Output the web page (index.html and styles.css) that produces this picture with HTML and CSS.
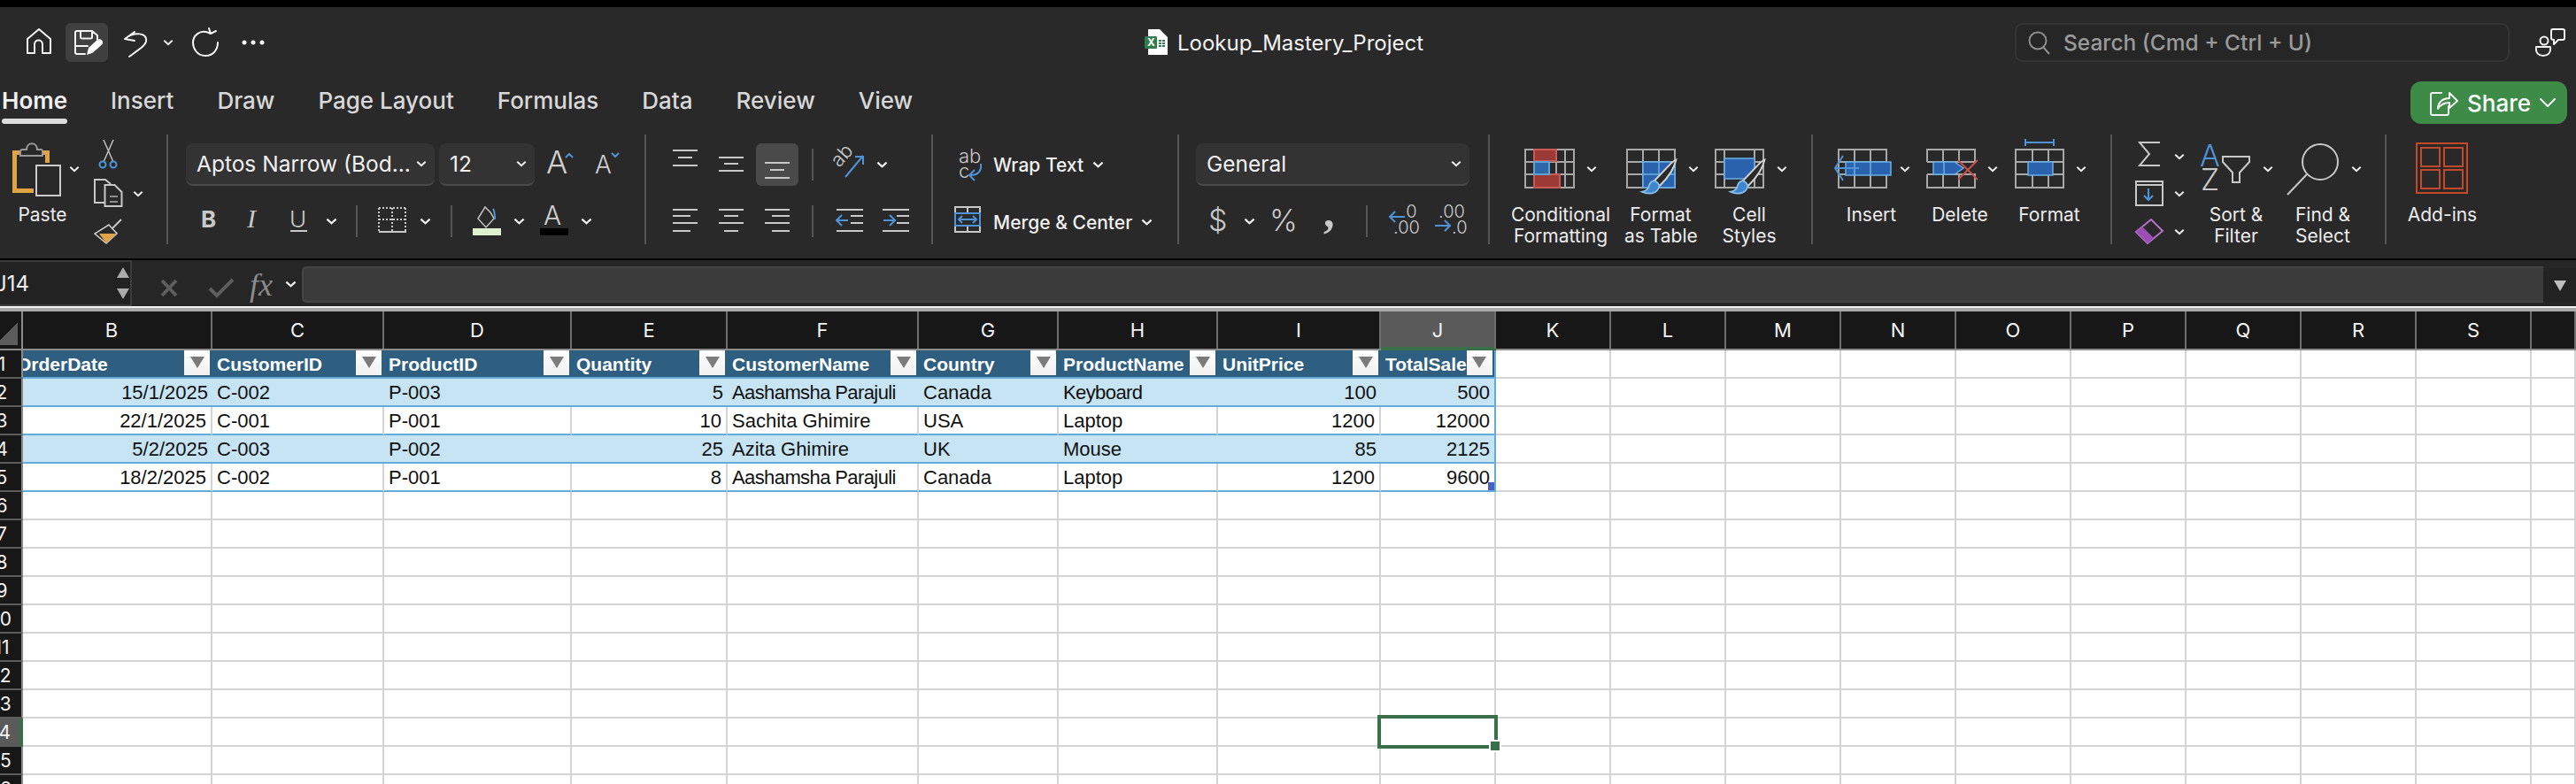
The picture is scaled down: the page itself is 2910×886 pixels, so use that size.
FILE: index.html
```html
<!DOCTYPE html>
<html lang="en">
<head>
    <meta charset="UTF-8">
    <title>Lookup_Mastery_Project</title>
    <link rel="stylesheet" href="styles.css">
</head>
<body>
    <svg class="defs" width="0" height="0">
        <symbol id="ch" viewBox="0 0 14 8"><path class="chev" d="M1.5 1.5 7 6.5l5.5-5"/></symbol>
        <symbol id="brush" viewBox="0 0 50 50">
            <path class="ln-brush" fill="#292929" d="M48 2c-2 1-5 3-7 5L19 30l7 7C38 25 46 12 48 2Z"/>
            <path class="blue-brush" d="M19 30c-6 1-7 5-8 9-1 3-4 5-9 6 9 4 20 3 23-6 1-3 0-6-6-9Z"/>
        </symbol>
    </svg>

    <div class="top-edge"></div>

    <header class="titlebar">
        <svg class="qat" width="340" height="72" viewBox="0 8 340 72">
            <path class="ln-w" d="M31 60V44L44 33l13 11v16h-9V50c0-6-9-6-9 0v10Z"/>
            <rect x="74" y="26" width="48" height="44" rx="6" fill="#404040"/>
            <path class="ln-w" d="M96 61H87c-1.500 0-2-1-2-2V37c0-1 .5-2 2-2h17l6 5v9M91 35v7c0 1 .5 1.500 2 1.500h9c1.500 0 2-.5 2-1.500v-7M85 52h14"/>
            <path fill="#fff" d="M98 62l2-8 10-9c2-1.500 4-1 5.500 1 1 1.500 1 3-.5 4.500l-10 9Z"/>
            <path class="ln-w" d="M141 44l11-8M141 44l11 2M141 44c10-8 26-8 24 3-1 4-4 6-19 17"/>
            <use href="#ch" x="184" y="44" width="12" height="8"/>
            <path class="ln-w" d="M238 38c-13-7-20 4-20 10s4 15 14 15 14-8 14-15M238 38l-2-6M238 38l6-3"/>
            <circle cx="276" cy="48" r="2.500" fill="#fff"/><circle cx="286" cy="48" r="2.500" fill="#fff"/><circle cx="296" cy="48" r="2.500" fill="#fff"/>
        </svg>
        <div class="doc-title">
            <svg width="28" height="30" viewBox="1291 33 28 30">
                <path fill="#fff" d="M1296 33h13l9 9v20h-22Z"/>
                <rect x="1292" y="41" width="14" height="14" rx="1" fill="#2f7d4c"/>
                <text class="xl-x" x="1295" y="52">X</text>
                <path fill="#2f7d4c" d="M1308 45h3v2h-3zM1312 45h3v2h-3zM1308 48h3v2h-3zM1312 48h3v2h-3zM1308 51h3v2h-3zM1312 51h3v2h-3z"/>
            </svg>
            <span>Lookup_Mastery_Project</span>
        </div>
        <div class="search">
            <svg width="28" height="28" viewBox="0 0 28 28"><circle class="ln-grey" cx="12" cy="12" r="9.500"/><path class="ln-grey" d="M18 19l7 8"/></svg>
            <span>Search (Cmd + Ctrl + U)</span>
        </div>
        <svg class="collab" width="34" height="34" viewBox="0 0 34 34">
            <circle class="ln-w" cx="10" cy="15" r="4.500"/>
            <path class="ln-w" d="M1 22h16c1 7-3 10-8 10s-9-3-8-10Z"/>
            <path class="ln-w" d="M20 2h11c1 0 2 1 2 2v8c0 1-1 2-2 2h-5l-5 5v-5c-2 0-3-1-3-2V4c0-1 1-2 2-2Z"/>
        </svg>
    </header>

    <nav class="tabs">
        <div class="tab active">Home</div>
        <div class="tab">Insert</div>
        <div class="tab">Draw</div>
        <div class="tab">Page Layout</div>
        <div class="tab">Formulas</div>
        <div class="tab">Data</div>
        <div class="tab">Review</div>
        <div class="tab">View</div>
        <button class="share">
            <svg width="34" height="34" viewBox="0 0 34 34"><path class="ln-w" d="M15 6H5c-1.500 0-2 1-2 2v21c0 1.500 .5 2 2 2h16c1.500 0 2-.5 2-2v-8"/><path class="ln-w" d="M11 24c0-8 6-12 13-12V6l9 9-9 8v-6c-6 0-10 2-13 7Z"/></svg>
            <span>Share</span>
            <svg width="18" height="10" viewBox="0 0 18 10"><path class="ln-w" d="M1 1l8 8 8-8"/></svg>
        </button>
    </nav>

    <section class="ribbon">
        <div class="group g-clip">
            <div class="paste">
                <svg width="100" height="79" viewBox="0 152 100 79">
                    <path fill="#e0a346" d="M14 170h10v5h-5v38h19v5H14ZM48 170h8v14h-5v-9h-3Z"/>
                    <path fill="#292929" stroke="#999" stroke-width="2" d="M23 176v-5c0-1 1-2 3-2h4c0-9 12-9 12 0h4c2 0 2 1 2 2v5Z"/>
                    <rect x="41" y="187" width="27" height="34" fill="#292929" stroke="#ccc" stroke-width="2"/>
                    <use href="#ch" x="78" y="187" width="12" height="8"/>
                </svg>
                <div class="big-label">Paste</div>
            </div>
            <svg width="86" height="124" viewBox="100 152 86 124">
                <path class="ln-thin" d="M117 158l11 25M128 158l-11 25"/>
                <circle class="ln-blue" cx="116" cy="186" r="3.500"/><circle class="ln-blue" cx="128" cy="186" r="3.500"/>
                <path class="ln" d="M119 229h-12v-26h12l6 5"/>
                <path class="ln" d="M118.500 209h11l8 8v16h-19Z"/>
                <path class="ln-grey" d="M124 222h9M124 228h9"/>
                <use href="#ch" x="150" y="215" width="12" height="8"/>
                <path class="ln" d="M137 248l-10 10M122 255l10 9"/>
                <path fill="#292929" stroke="#ccc" stroke-width="1.500" d="M123 254l-16 10 13 11 12-11Z"/>
                <path fill="#e0a346" d="M112 264l19 0-11 11Z"/>
            </svg>
        </div>

        <div class="group g-font">
            <div class="row-ctrl">
                <div class="combo font-name"><span>Aptos Narrow (Bod...</span><svg width="12" height="8"><use href="#ch" width="12" height="8"/></svg></div>
                <div class="combo font-size"><span>12</span><svg width="12" height="8"><use href="#ch" width="12" height="8"/></svg></div>
                <svg width="100" height="48" viewBox="604 162 100 48">
                    <text class="t-thin big-a" x="617" y="196">A</text>
                    <path class="ln-blue" d="M639 178l4-4 4 4"/>
                    <text class="t-thin small-a" x="672" y="196">A</text>
                    <path class="ln-blue" d="M691 173l4 4 4-4"/>
                </svg>
            </div>
            <svg class="row-2" width="538" height="44" viewBox="190 230 538 44">
                <text class="t-b" x="227" y="257">B</text>
                <text class="t-i" x="279" y="257">I</text>
                <text class="t-u" x="327" y="257">U</text>
                <path class="ln" d="M328 261h19"/>
                <use href="#ch" x="368" y="246" width="13" height="8"/>
                <path class="sep-v" d="M403 232v36M510 232v36"/>
                <path class="ln-dash" d="M428 235h30M428 248h30M428 235v26M443 235v26M458 235v26"/>
                <path class="ln" d="M428 262h31"/>
                <use href="#ch" x="474" y="246" width="13" height="8"/>
                <path class="ln-thin" d="M540 247l8-13 6 6 4 7-9 10Z"/>
                <path class="ln-blue" d="M557 236c2 3 2 6 2 12"/>
                <rect x="534" y="258" width="32" height="8" fill="#dff0cf"/>
                <use href="#ch" x="580" y="246" width="13" height="8"/>
                <text class="t-thin a-col" x="614" y="254">A</text>
                <rect x="610" y="258" width="32" height="8" fill="#000"/>
                <use href="#ch" x="656" y="246" width="13" height="8"/>
            </svg>
        </div>

        <div class="group g-align">
            <svg width="322" height="48" viewBox="730 162 322 48">
                <path class="ln" d="M760 170h28M766 178h16M760 187h28M812 178h28M818 185h16M812 193h28"/>
                <rect x="854" y="162" width="48" height="48" rx="6" fill="#4a4a4a"/>
                <path class="ln" d="M864 184h28M870 192h16M864 201h28"/>
                <path class="sep-v" d="M918 168v36"/>
                <text class="t-ab" x="0" y="0" transform="translate(948 190) rotate(-48)">ab</text>
                <path class="ln-blue" d="M955 200l20-24M966 177h9v9"/>
                <use href="#ch" x="990" y="182" width="13" height="8"/>
            </svg>
            <svg class="row-2" width="322" height="44" viewBox="730 230 322 44">
                <path class="ln" d="M760 237h28M760 244h20M760 252h28M760 261h20M812 237h28M818 244h16M812 252h28M818 261h16M864 237h28M872 244h20M864 252h28M872 261h20"/>
                <path class="sep-v" d="M918 232v36"/>
                <path class="ln" d="M945 237h30M961 244h14M961 252h14M945 261h30M997 237h30M1013 244h14M1013 252h14M997 261h30"/>
                <path class="ln-blue" d="M958 249h-12M951 243l-6 6 6 6M998 249h12M1005 243l6 6-6 6"/>
            </svg>
        </div>

        <div class="group g-wrap">
            <div class="line-btn">
                <svg width="68" height="48" viewBox="1054 162 68 48">
                    <text class="t-ab2" x="1083" y="184">ab</text>
                    <text class="t-ab2" x="1083" y="201">c</text>
                    <path class="ln-blue" d="M1108 185c1 8-3 13-12 13M1101 192l-6 6 6 6"/>
                </svg>
                <span>Wrap Text</span>
                <svg width="13" height="8"><use href="#ch" width="13" height="8"/></svg>
            </div>
            <div class="line-btn">
                <svg width="68" height="44" viewBox="1054 230 68 44">
                    <path class="ln" d="M1079 235h28v28h-28ZM1093 235v7M1093 256v7"/>
                    <path class="ln-blue" d="M1079 242h28v14h-28ZM1083 249h20M1087 245l-4 4 4 4M1099 245l4 4-4 4"/>
                </svg>
                <span>Merge &amp; Center</span>
                <svg width="13" height="8"><use href="#ch" width="13" height="8"/></svg>
            </div>
        </div>

        <div class="group g-num">
            <div class="combo num-format"><span>General</span><svg width="12" height="8"><use href="#ch" width="12" height="8"/></svg></div>
            <svg class="row-2" width="349" height="44" viewBox="1332 230 349 44">
                <text class="t-num" x="1365" y="261">$</text>
                <use href="#ch" x="1405" y="246" width="13" height="8"/>
                <text class="t-num" x="1434" y="261">%</text>
                <text class="t-comma" x="1495" y="256">,</text>
                <path class="sep-v" d="M1544 232v36"/>
                <text class="t-dec" x="1583" y="246">.0</text>
                <text class="t-dec" x="1574" y="264">.00</text>
                <path class="ln-blue" d="M1587 245h-17M1576 239l-6 6 6 6"/>
                <text class="t-dec" x="1625" y="246">.00</text>
                <text class="t-dec" x="1640" y="264">.0</text>
                <path class="ln-blue" d="M1621 255h17M1632 249l6 6-6 6"/>
            </svg>
        </div>

        <div class="group g-styles">
            <svg width="362" height="79" viewBox="1684 152 362 79">
                <path class="ln-grid" d="M1724 169h55v43h-55ZM1724 183h55M1724 197h55M1734 169v43M1759 169v43M1769 169v43"/>
                <path class="fill-red" d="M1734 169h25v13h-25ZM1734 197h29v15h-29Z"/>
                <path class="fill-blue" d="M1734 183h17v14h-17Z"/>
                <use href="#ch" x="1793" y="187" width="12" height="8"/>

                <path class="ln-grid" d="M1839 169h54v43h-54ZM1839 183h54M1839 197h54M1857 169v43M1875 169v43"/>
                <path class="fill-blue2" d="M1857 183h36v29h-36Z"/>
                <path class="ln-sky" d="M1857 197h36M1875 183v29"/>
                <use href="#brush" x="1852" y="179" width="46" height="42"/>
                <use href="#ch" x="1908" y="187" width="12" height="8"/>

                <path class="ln-grid" d="M1939 169h54v43h-54ZM1939 183h54M1939 197h54M1949 169v43M1983 169v43"/>
                <path class="fill-blue2" d="M1949 179h34v23h-34Z"/>
                <use href="#brush" x="1952" y="179" width="46" height="42"/>
                <use href="#ch" x="2008" y="187" width="12" height="8"/>
            </svg>
            <div class="big-labels labels-styles">
                <div class="big-label">Conditional<br>Formatting</div>
                <div class="big-label">Format<br>as Table</div>
                <div class="big-label">Cell<br>Styles</div>
            </div>
        </div>

        <div class="group g-cells">
            <svg width="336" height="79" viewBox="2048 152 336 79">
                <path class="ln-grid" d="M2077 169h54v43h-54ZM2077 183h54M2077 197h54M2095 169v43M2113 169v43"/>
                <path class="fill-blue2" d="M2085 183h51v15h-51Z"/>
                <path class="ln-sky" d="M2095 183v15M2113 183v15"/>
                <path class="ln-blue" d="M2100 190h-26M2082 176l-9 14 9 14"/>
                <use href="#ch" x="2146" y="187" width="12" height="8"/>

                <path class="ln-grid" d="M2177 183v-14h54v14h-54M2177 197v15h54v-15h-54M2195 169v14M2213 169v14M2195 197v15M2213 197v15"/>
                <path class="fill-blue2" d="M2184 183h24l10 7-10 7h-24Z"/>
                <path class="ln-sky" d="M2196 183v14"/>
                <path class="ln-red" d="M2212 181l22 22M2234 181l-22 22"/>
                <use href="#ch" x="2245" y="187" width="12" height="8"/>

                <path class="ln-blue" d="M2288 161h32M2288 157v8M2320 157v8"/>
                <path class="ln-grid" d="M2277 169h54v43h-54ZM2277 183h54M2277 197h54M2296 169v43M2314 169v43"/>
                <path class="fill-blue2" d="M2291 183h28v15h-28Z"/>
                <use href="#ch" x="2345" y="187" width="12" height="8"/>
            </svg>
            <div class="big-labels labels-cells">
                <div class="big-label">Insert</div>
                <div class="big-label">Delete</div>
                <div class="big-label">Format</div>
            </div>
        </div>

        <div class="group g-edit">
            <svg width="90" height="124" viewBox="2386 152 90 124">
                <path class="ln" d="M2440 161h-23l11 13-11 13h23"/>
                <use href="#ch" x="2456" y="173" width="12" height="8"/>
                <path class="ln" d="M2413 205h30v27h-30ZM2413 209h30"/>
                <path class="ln-blue" d="M2427 213v13M2422 221l5 5 5-5"/>
                <use href="#ch" x="2456" y="215" width="12" height="8"/>
                <path class="ln-pur" d="M2413 262l17-14 13 13-17 14Z"/>
                <path fill="#9a4fb4" d="M2413 262l7-6 13 13-7 6Z"/>
                <use href="#ch" x="2456" y="258" width="12" height="8"/>
            </svg>
            <div class="edit-big">
                <svg width="204" height="79" viewBox="2476 152 204 79">
                    <text class="t-sort blue-text" x="2485" y="188">A</text>
                    <text class="t-sort" x="2486" y="215">Z</text>
                    <path class="ln" d="M2511 177h30v6l-11 12v11h-8v-11l-11-12Z"/>
                    <use href="#ch" x="2556" y="187" width="12" height="8"/>
                    <circle class="ln" cx="2621" cy="183" r="20"/>
                    <path class="ln" d="M2606 197l-22 23"/>
                    <use href="#ch" x="2656" y="187" width="12" height="8"/>
                </svg>
                <div class="big-labels labels-edit">
                    <div class="big-label">Sort &amp;<br>Filter</div>
                    <div class="big-label">Find &amp;<br>Select</div>
                </div>
            </div>
        </div>

        <div class="group g-addins">
            <svg width="120" height="79" viewBox="2696 152 120 79">
                <path class="ln-org" d="M2730 162h57v56h-57Z"/>
                <path class="ln-org" d="M2735 167h21v21h-21ZM2761 167h21v21h-21ZM2735 192h21v21h-21ZM2761 192h21v21h-21Z"/>
            </svg>
            <div class="big-labels labels-addins">
                <div class="big-label">Add-ins</div>
            </div>
        </div>
    </section>

    <div class="formula-bar">
        <div class="name-box">
            <span>J14</span>
            <div class="spin"><i class="up"></i><i class="down"></i></div>
        </div>
        <svg class="fx-icons" width="190" height="52" viewBox="150 294 190 52">
            <path class="fx-off" d="M183 317l16 17M199 317l-16 17"/>
            <path class="fx-off" d="M237 326l8 8 18-18"/>
            <text class="t-fx" x="282" y="334">fx</text>
            <use href="#ch" x="322" y="317" width="13" height="8"/>
        </svg>
        <div class="formula-input"></div>
        <div class="formula-drop"><i></i></div>
    </div>
    <div class="bar-line"></div>

    <main class="sheet">
        <div class="row col-heads">
            <div class="corner"></div>
            <div class="col-b">B</div><div>C</div><div>D</div><div>E</div><div>F</div><div>G</div><div>H</div><div>I</div><div class="cur">J</div>
            <div>K</div><div>L</div><div>M</div><div>N</div><div>O</div><div>P</div><div>Q</div><div>R</div><div>S</div><div></div>
        </div>

        <div class="row">
            <div class="rh"><span>1</span></div>
            <div class="th first"><span>OrderDate</span><b></b></div>
            <div class="th"><span>CustomerID</span><b></b></div>
            <div class="th"><span>ProductID</span><b></b></div>
            <div class="th"><span>Quantity</span><b></b></div>
            <div class="th"><span>CustomerName</span><b></b></div>
            <div class="th"><span>Country</span><b></b></div>
            <div class="th"><span>ProductName</span><b></b></div>
            <div class="th"><span>UnitPrice</span><b></b></div>
            <div class="th end"><span>TotalSale</span><b></b></div>
            <i></i><i></i><i></i><i></i><i></i><i></i><i></i><i></i><i></i><i></i>
        </div>
        <div class="row band">
            <div class="rh"><span>2</span></div>
            <div class="td num">15/1/2025</div><div class="td">C-002</div><div class="td">P-003</div><div class="td num">5</div><div class="td tight">Aashamsha Parajuli</div><div class="td">Canada</div><div class="td tight">Keyboard</div><div class="td num">100</div><div class="td num end">500</div>
            <i></i><i></i><i></i><i></i><i></i><i></i><i></i><i></i><i></i><i></i>
        </div>
        <div class="row plain">
            <div class="rh"><span>3</span></div>
            <div class="td num">22/1/2025</div><div class="td">C-001</div><div class="td">P-001</div><div class="td num">10</div><div class="td">Sachita Ghimire</div><div class="td">USA</div><div class="td">Laptop</div><div class="td num">1200</div><div class="td num end">12000</div>
            <i></i><i></i><i></i><i></i><i></i><i></i><i></i><i></i><i></i><i></i>
        </div>
        <div class="row band">
            <div class="rh"><span>4</span></div>
            <div class="td num">5/2/2025</div><div class="td">C-003</div><div class="td">P-002</div><div class="td num">25</div><div class="td">Azita Ghimire</div><div class="td">UK</div><div class="td">Mouse</div><div class="td num">85</div><div class="td num end">2125</div>
            <i></i><i></i><i></i><i></i><i></i><i></i><i></i><i></i><i></i><i></i>
        </div>
        <div class="row plain">
            <div class="rh"><span>5</span></div>
            <div class="td num">18/2/2025</div><div class="td">C-002</div><div class="td">P-001</div><div class="td num">8</div><div class="td tight">Aashamsha Parajuli</div><div class="td">Canada</div><div class="td">Laptop</div><div class="td num">1200</div><div class="td num end">9600<em class="tbl-grip"></em></div>
            <i></i><i></i><i></i><i></i><i></i><i></i><i></i><i></i><i></i><i></i>
        </div>

        <div class="row"><div class="rh"><span>6</span></div><i></i><i></i><i></i><i></i><i></i><i></i><i></i><i></i><i></i><i></i><i></i><i></i><i></i><i></i><i></i><i></i><i></i><i></i><i></i></div>
        <div class="row"><div class="rh"><span>7</span></div><i></i><i></i><i></i><i></i><i></i><i></i><i></i><i></i><i></i><i></i><i></i><i></i><i></i><i></i><i></i><i></i><i></i><i></i><i></i></div>
        <div class="row"><div class="rh"><span>8</span></div><i></i><i></i><i></i><i></i><i></i><i></i><i></i><i></i><i></i><i></i><i></i><i></i><i></i><i></i><i></i><i></i><i></i><i></i><i></i></div>
        <div class="row"><div class="rh"><span>9</span></div><i></i><i></i><i></i><i></i><i></i><i></i><i></i><i></i><i></i><i></i><i></i><i></i><i></i><i></i><i></i><i></i><i></i><i></i><i></i></div>
        <div class="row"><div class="rh"><span>10</span></div><i></i><i></i><i></i><i></i><i></i><i></i><i></i><i></i><i></i><i></i><i></i><i></i><i></i><i></i><i></i><i></i><i></i><i></i><i></i></div>
        <div class="row"><div class="rh"><span>11</span></div><i></i><i></i><i></i><i></i><i></i><i></i><i></i><i></i><i></i><i></i><i></i><i></i><i></i><i></i><i></i><i></i><i></i><i></i><i></i></div>
        <div class="row"><div class="rh"><span>12</span></div><i></i><i></i><i></i><i></i><i></i><i></i><i></i><i></i><i></i><i></i><i></i><i></i><i></i><i></i><i></i><i></i><i></i><i></i><i></i></div>
        <div class="row"><div class="rh"><span>13</span></div><i></i><i></i><i></i><i></i><i></i><i></i><i></i><i></i><i></i><i></i><i></i><i></i><i></i><i></i><i></i><i></i><i></i><i></i><i></i></div>
        <div class="row"><div class="rh cur"><span>14</span></div><i></i><i></i><i></i><i></i><i></i><i></i><i></i><i></i><i></i><i></i><i></i><i></i><i></i><i></i><i></i><i></i><i></i><i></i><i></i></div>
        <div class="row"><div class="rh"><span>15</span></div><i></i><i></i><i></i><i></i><i></i><i></i><i></i><i></i><i></i><i></i><i></i><i></i><i></i><i></i><i></i><i></i><i></i><i></i><i></i></div>
        <div class="row"><div class="rh"><span>16</span></div><i></i><i></i><i></i><i></i><i></i><i></i><i></i><i></i><i></i><i></i><i></i><i></i><i></i><i></i><i></i><i></i><i></i><i></i><i></i></div>

        <div class="selection"><div class="handle"></div></div>
    </main>
</body>
</html>
```

FILE: styles.css
```css
html, body {
    margin: 0;
    height: 886px;
    overflow: hidden;
}

body {
    width: 2910px;
    background: #292929;
    color: #e8e8e8;
    font-family: Inter, "Liberation Sans", sans-serif;
}

svg {
    display: block;
    flex: none;
}

.defs {
    position: absolute;
}

.top-edge {
    height: 8px;
    background: #000;
}

/* title bar */
.titlebar {
    height: 72px;
    display: flex;
    align-items: center;
}

.qat {
    margin-right: 952px;
}

.doc-title {
    width: 984px;
    margin-top: 8px;
    display: flex;
    align-items: center;
    gap: 10px;
    font-size: 24px;
    color: #f2f2f2;
}

.search {
    width: 559px;
    height: 44px;
    margin-top: 8px;
    box-sizing: border-box;
    border: 2px solid #343434;
    border-radius: 9px;
    background: #262626;
    display: flex;
    align-items: center;
    gap: 13px;
    padding-left: 12px;
    font-size: 24.500px;
    font-weight: 500;
    color: #9a9a9a;
}

.collab {
    margin: 8px 0 0 29px;
}

/* tabs */
.tabs {
    height: 72px;
    display: flex;
    align-items: flex-start;
    gap: 49px;
    padding-left: 2px;
    box-sizing: border-box;
}

.tab {
    margin-top: 18px;
    font-size: 26px;
    font-weight: 500;
    line-height: 32px;
    color: #d8d8d8;
}

.tab.active {
    color: #f0f0f0;
    font-weight: 600;
}

.tab.active::after {
    content: "";
    display: block;
    height: 6px;
    margin-top: 4px;
    border-radius: 3px;
    background: #dcdcdc;
}

.share {
    width: 177px;
    height: 48px;
    margin: 12px 10px 0 auto;
    padding: 0 13px 0 20px;
    border: none;
    border-radius: 12px;
    background: #3e8a47;
    color: #fff;
    font: 500 26px Inter, sans-serif;
    display: flex;
    align-items: center;
    justify-content: space-between;
}

/* ribbon */
.ribbon {
    height: 140px;
    display: flex;
    align-items: flex-start;
    border-bottom: 2px solid #000;
}

.group {
    height: 124px;
    box-sizing: border-box;
    border-right: 2px solid #555;
    flex: none;
}

.g-clip { width: 190px; display: flex; }
.g-font { width: 540px; padding: 10px 0 0 20px; }
.g-align { width: 324px; padding-top: 10px; }
.g-wrap { width: 278px; padding-top: 10px; }
.g-num { width: 351px; padding: 10px 0 0 19px; }
.g-styles { width: 365px; }
.g-cells { width: 338px; }
.g-edit { width: 310px; display: flex; }
.g-addins { flex: 1; border-right: none; }

.row-ctrl {
    display: flex;
    gap: 5px;
}

.row-ctrl svg:last-child {
    margin-left: -5px;
}

.row-2 {
    margin-top: 20px;
}

.g-font .row-2 {
    margin-left: -20px;
}

.g-num .row-2 {
    margin-left: -19px;
}

.combo {
    height: 48px;
    box-sizing: border-box;
    background: #333;
    border-bottom: 2px solid #4a4a4a;
    border-radius: 8px;
    display: flex;
    align-items: center;
    justify-content: space-between;
    padding: 0 9px 0 12px;
    font-size: 24.500px;
    color: #f0f0f0;
}

.font-name { width: 281px; }
.font-size { width: 108px; }
.num-format { width: 309px; }

.line-btn {
    display: flex;
    align-items: center;
    height: 48px;
    font-size: 21px;
    font-weight: 500;
    color: #f0f0f0;
}

.line-btn + .line-btn {
    margin-top: 19px;
    height: 44px;
}

.line-btn span {
    margin-right: 10px;
}

.big-label {
    font-size: 21px;
    line-height: 24px;
    text-align: center;
    white-space: nowrap;
    color: #ececec;
}

.paste .big-label {
    width: 96px;
}

.big-labels {
    display: grid;
    height: 45px;
}

.labels-styles { grid-template-columns: 114px 82px 88px; column-gap: 15px; margin-left: 23px; }
.labels-cells { grid-template-columns: 60px 72px 66px; column-gap: 34px; margin-left: 36px; }
.labels-cells .big-label:last-child { margin-left: -4px; }
.labels-edit { grid-template-columns: 62px 66px; column-gap: 34px; margin-left: 19px; }
.labels-addins { grid-template-columns: 80px; margin-left: 23px; }

/* icon strokes */
.chev { fill: none; stroke: #efefef; stroke-width: 2.4; }
.ln { fill: none; stroke: #c8c8c8; stroke-width: 2; }
.ln-thin { stroke: #c0c0c0; stroke-width: 1.5; fill: none; }
.ln-brush { stroke: #d0d0d0; stroke-width: 2.4; }
.ln-w { fill: none; stroke: #f4f4f4; stroke-width: 2; stroke-linejoin: round; stroke-linecap: round; }
.ln-grey { fill: none; stroke: #8e8e8e; stroke-width: 2; }
.ln-blue { fill: none; stroke: #4f94d8; stroke-width: 2; }
.ln-sky { fill: none; stroke: #6ab0e6; stroke-width: 1.5; }
.ln-red { fill: none; stroke: #c9504a; stroke-width: 2; }
.ln-pur { fill: none; stroke: #b573c8; stroke-width: 2; }
.ln-org { fill: none; stroke: #c2492a; stroke-width: 2; }
.ln-grid { fill: none; stroke: #a8a8a8; stroke-width: 2; }
.ln-dash { fill: none; stroke: #c8c8c8; stroke-width: 2; stroke-dasharray: 2 2; }
.sep-v { stroke: #555; stroke-width: 2; fill: none; }
.fill-red { fill: #9c3a36; stroke: #c95b55; stroke-width: 2; }
.fill-blue { fill: #2f68a8; stroke: #5ca4d8; stroke-width: 2; }
.fill-blue2 { fill: #2a62ae; stroke: #6ab0e6; stroke-width: 1.5; }
.blue-brush { fill: #3f86cc; stroke: #8cc1ec; stroke-width: 2; }
.fx-off { fill: none; stroke: #5e5e5e; stroke-width: 4; }

/* letters inside icons */
.t-thin { font-family: Inter, sans-serif; font-weight: 300; fill: #cfcfcf; }
.big-a { font-size: 36px; }
.small-a { font-size: 28px; }
.a-col { font-size: 30px; }
.t-b { font: 700 26px Inter, sans-serif; fill: #c8c8c8; }
.t-i { font: italic 400 30px "Liberation Serif", serif; fill: #c8c8c8; }
.t-u { font: 300 26px Inter, sans-serif; fill: #c8c8c8; }
.t-ab { font: 300 22px Inter, sans-serif; fill: #c8c8c8; }
.t-ab2 { font: 300 22px Inter, sans-serif; fill: #c8c8c8; }
.t-num { font: 300 34px Inter, sans-serif; fill: #c8c8c8; }
.t-comma { font: 700 50px "Liberation Serif", serif; fill: #c8c8c8; }
.t-dec { font: 300 20px Inter, sans-serif; fill: #c8c8c8; }
.t-sort { font: 300 34px Inter, sans-serif; fill: #c8c8c8; }
.blue-text { fill: #4f94d8; }
.t-fx { font: italic 400 36px "Liberation Serif", serif; fill: #8c8c8c; }
.xl-x { font: 700 12px Inter, sans-serif; fill: #fff; }

/* formula bar */
.formula-bar {
    height: 52px;
    display: flex;
    background: #262626;
}

.name-box {
    width: 149px;
    box-sizing: border-box;
    background: #222;
    border-top: 2px solid #3c3c3c;
    border-right: 2px solid #3c3c3c;
    border-bottom: 2px solid #3c3c3c;
    display: flex;
    align-items: center;
    justify-content: space-between;
    padding-right: 1px;
    font-size: 24px;
    color: #f0f0f0;
    overflow: hidden;
}

.name-box span {
    margin-left: -6px;
}

.spin {
    display: flex;
    flex-direction: column;
    gap: 12px;
}

.spin i {
    display: block;
    width: 0;
    border-left: 7px solid transparent;
    border-right: 7px solid transparent;
}

.spin .up { border-bottom: 12px solid #ababab; }
.spin .down { border-top: 12px solid #ababab; }

.fx-icons {
    margin-left: 1px;
}

.formula-input {
    flex: 1;
    margin: 7px 0 4px 1px;
    background: #3b3b3b;
    border: 2px solid #454545;
    border-right: none;
    border-radius: 5px 0 0 5px;
}

.formula-drop {
    width: 37px;
    margin: 9px 0 4px;
    background: #222;
    border-radius: 6px 0 0 6px;
    display: flex;
    align-items: center;
    justify-content: center;
}

.formula-drop i {
    border-left: 7px solid transparent;
    border-right: 7px solid transparent;
    border-top: 12px solid #bdbdbd;
}

.bar-line {
    height: 6px;
    box-sizing: border-box;
    background: #a9a9a9;
    border-top: 2px solid #f2f2f2;
}

/* sheet */
.sheet {
    position: relative;
    background: #fff;
    font-family: "Liberation Sans", sans-serif;
    font-size: 22px;
    color: #111;
}

.row {
    display: grid;
    grid-template-columns: 26px 214px 194px 212px 176px 216px 158px 180px 184px repeat(10, 130px) 1fr;
    height: 32px;
}

.row i {
    border-right: 2px solid #d4d4d4;
    border-bottom: 2px solid #d4d4d4;
}

/* column letters */
.col-heads {
    height: 44px;
    background: #171717;
    border-bottom: 2px solid #8c8c8c;
    box-sizing: border-box;
    color: #f4f4f4;
    font-family: Inter, sans-serif;
    font-size: 22px;
}

.col-heads div {
    border-right: 2px solid #6e6e6e;
    display: flex;
    align-items: center;
    justify-content: center;
}

/* column B runs on under the row numbers */
.col-heads .col-b {
    padding-right: 12px;
}

.col-heads .cur {
    background: #5a5a5a;
    box-shadow: inset 0 -2px 0 #3a7049, 0 2px 0 #3a7049;
}

.corner {
    background: linear-gradient(135deg, transparent 50%, #5c5c5c 50%) 0 8px / 20px 30px no-repeat;
    border-right-color: #8c8c8c !important;
}

/* row numbers, cut by the window edge */
.rh {
    background: #171717;
    border-right: 2px solid #8c8c8c;
    border-bottom: 2px solid #5c5c5c;
    box-sizing: border-box;
    padding-right: 20px;
    display: flex;
    align-items: center;
    justify-content: center;
    color: #f4f4f4;
    font-family: Inter, sans-serif;
    font-size: 21px;
    overflow: hidden;
}

.rh.cur {
    background: #5a5a5a;
    border-right: 4px solid #3a7049;
}

/* table */
.th {
    background: #2f5f80;
    border-bottom: 2px solid #62acdc;
    color: #fff;
    font-weight: 700;
    font-size: 21px;
    display: flex;
    align-items: center;
    justify-content: space-between;
    box-sizing: border-box;
    padding: 0 3px 0 5px;
    overflow: hidden;
}

.th span {
    margin-top: 2px;
}

.th.first span {
    margin-left: -12px;
}

.th.end,
.td.end {
    border-right: 2px solid #62acdc;
}

.th b {
    width: 29px;
    height: 28px;
    margin-bottom: 3px;
    box-sizing: border-box;
    background: linear-gradient(#fff, #f0f0f0);
    display: flex;
    align-items: center;
    justify-content: center;
    flex: none;
}

.th b::after {
    content: "";
    border-left: 8px solid transparent;
    border-right: 8px solid transparent;
    border-top: 13px solid #7b7b7b;
}

.td {
    position: relative;
    box-sizing: border-box;
    border-bottom: 2px solid #62acdc;
    padding: 0 5px;
    line-height: 31px;
    white-space: nowrap;
    overflow: hidden;
}

.tight {
    letter-spacing: -0.6px;
}

.num {
    text-align: right;
}

.band .td {
    background: #c6e4f3;
}

.plain .td {
    border-right: 2px solid #d4d4d4;
}

.plain .td.end {
    border-right-color: #62acdc;
}

.tbl-grip {
    position: absolute;
    right: 0;
    bottom: 0;
    width: 7px;
    height: 9px;
    background: #4a5fbf;
}

.selection {
    position: absolute;
    left: 1556px;
    top: 456px;
    width: 136px;
    height: 38px;
    box-sizing: border-box;
    border: 4px solid #3a7049;
}

.handle {
    position: absolute;
    right: -8px;
    bottom: -8px;
    width: 10px;
    height: 10px;
    background: #3a7049;
    border: 2px solid #fff;
}
```
